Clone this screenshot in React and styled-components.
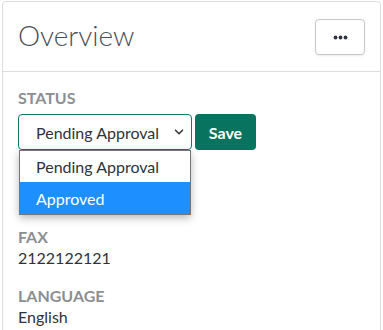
import React from "react";
import styled, { createGlobalStyle } from "styled-components";

const GlobalStyle = createGlobalStyle`
  html, body { margin: 0; padding: 0; background: #fff; }
  body { font-family: Lato, "Noto Sans", sans-serif; color: #2f3338; }
  * { box-sizing: border-box; }
`;

const Page = styled.div`
  padding: 1px 2px 0 2px;
  height: 330px;
  overflow: hidden;
`;

const Card = styled.section`
  width: 379px;
  border: 1px solid #dcdddf;
  border-radius: 4px;
  background: #fff;
  min-height: 360px;
`;

const Header = styled.header`
  height: 70px;
  display: flex;
  align-items: center;
  justify-content: space-between;
  padding: 0 15px 0 15px;
  border-bottom: 1px solid #dcdddf;
`;

const Title = styled.h2`
  margin: 0 0 3px 0;
  font-family: Lato, sans-serif;
  font-weight: 300;
  font-size: 28px;
  line-height: 34px;
  color: #4a4f55;
`;

const MoreButton = styled.button`
  width: 50px;
  height: 36px;
  display: flex;
  align-items: center;
  justify-content: center;
  background: #fff;
  border: 1px solid #c8c9cb;
  border-radius: 4px;
  box-shadow: 0 1px 2px rgba(0, 0, 0, 0.08);
  padding: 0;
  margin-top: 1px;
`;

const Body = styled.div`
  padding: 15px 15px;
  display: flex;
  flex-direction: column;
  gap: 17px;
`;

const Field = styled.div`
  display: flex;
  flex-direction: column;
  position: relative;
  margin-bottom: ${(p) => (p.$extraSpace ? "59px" : "0")};
`;

const Label = styled.div`
  font-size: 16px;
  line-height: 21px;
  font-weight: 700;
  text-transform: uppercase;
  color: #8b8f93;
`;

const Value = styled.div`
  font-size: 16px;
  line-height: 21px;
  color: #2f3338;
`;

const Controls = styled.div`
  display: flex;
  gap: 3px;
  margin-top: 6px;
  position: relative;
`;

const SelectBox = styled.div`
  width: 174px;
  height: 36px;
  display: flex;
  align-items: center;
  justify-content: space-between;
  padding: 0 6px 0 17px;
  border: 1px solid #0b7a68;
  border-radius: 4px;
  font-size: 16px;
  color: #2f3338;
  background: #fff;
`;

const SaveButton = styled.button`
  width: 61px;
  height: 36px;
  border: none;
  border-radius: 4px;
  background: #08735f;
  color: #fff;
  font-family: Lato, sans-serif;
  font-weight: 700;
  font-size: 16px;
  padding: 0;
`;

const ListBox = styled.ul`
  position: absolute;
  top: 36px;
  left: 1px;
  width: 172px;
  margin: 0;
  padding: 0;
  list-style: none;
  background: #fff;
  border: 1px solid #767676;
  box-shadow: 0 3px 8px rgba(0, 0, 0, 0.28);
  z-index: 5;
`;

const Option = styled.li`
  height: ${(p) => (p.$first ? "31px" : "32px")};
  display: flex;
  align-items: center;
  padding-left: 16px;
  font-size: 16px;
  color: ${(p) => (p.$selected ? "#fff" : "#2f3338")};
  background: ${(p) => (p.$selected ? "#1e8fff" : "#fff")};
`;

const Dots = () => (
  <svg width="15" height="5" viewBox="0 0 15 5">
    <circle cx="2.5" cy="2.5" r="1.9" fill="#2f3440" />
    <circle cx="7.5" cy="2.5" r="1.9" fill="#2f3440" />
    <circle cx="12.5" cy="2.5" r="1.9" fill="#2f3440" />
  </svg>
);

const Chevron = () => (
  <svg width="12" height="8" viewBox="0 0 12 8">
    <path d="M2.5 2.2 L6 5.7 L9.5 2.2" fill="none" stroke="#3a3a3a" strokeWidth="1.6" strokeLinecap="round" strokeLinejoin="round" />
  </svg>
);

export default function App() {
  return (
    <>
      <GlobalStyle />
      <Page>
        <Card>
          <Header>
            <Title>Overview</Title>
            <MoreButton aria-label="More">
              <Dots />
            </MoreButton>
          </Header>
          <Body>
            <Field $extraSpace>
              <Label>Status</Label>
              <Controls>
                <SelectBox>
                  <span>Pending Approval</span>
                  <Chevron />
                </SelectBox>
                <SaveButton>Save</SaveButton>
                <ListBox>
                  <Option $first>Pending Approval</Option>
                  <Option $selected>Approved</Option>
                </ListBox>
              </Controls>
            </Field>
            <Field>
              <Label>Fax</Label>
              <Value>2122122121</Value>
            </Field>
            <Field>
              <Label>Language</Label>
              <Value>English</Value>
            </Field>
          </Body>
        </Card>
      </Page>
    </>
  );
}
